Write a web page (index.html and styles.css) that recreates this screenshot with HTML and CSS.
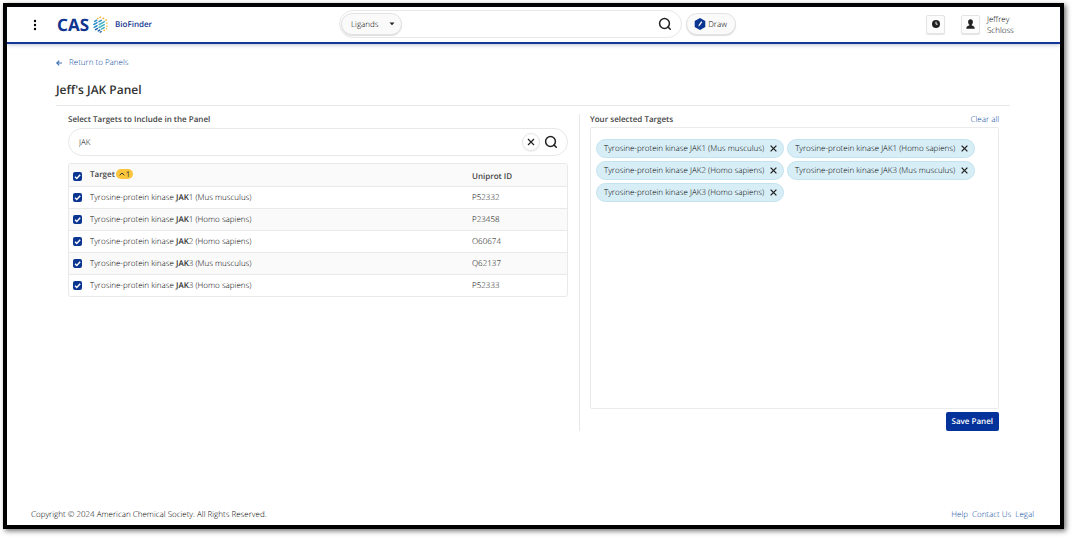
FILE: index.html
```html
<!DOCTYPE html>
<html lang="en">
<head>
<meta charset="utf-8">
<title>CAS BioFinder - Jeff's JAK Panel</title>
<link rel="stylesheet" href="styles.css">
</head>
<body>
<div class="window">
  <header class="topbar">
    <div class="brand">
      <button class="menu-btn" type="button" aria-label="Menu">
        <svg width="4" height="12" viewBox="0 0 4 12"><circle cx="2" cy="2" r="1.2"/><circle cx="2" cy="6" r="1.2"/><circle cx="2" cy="10" r="1.2"/></svg>
      </button>
      <a class="logo" href="#">
        <span class="logo-name">CAS</span>
        <svg class="logo-mark" width="17" height="18" viewBox="0 0 17 18" fill="none" stroke-width="1.600" stroke-linecap="round">
          <g stroke="#f5b93a"><path d="M8 1.500l.5-.3M11.200 2.700l.6-.3M5.500 2.700l.4-.2M14.300 4.500l.5-.3M15.300 7.500v.1M15.300 10.700v.1M14.800 13.500v.1M12.200 15.300l.4-.2"/></g>
          <g stroke="#2c8fc4"><path d="M2.300 5.700l2.200-1.200M1.500 9l3.400-1.900M6.900 6l2.500-1.400M1.800 12l3-1.700"/></g>
          <g stroke="#45b5c4"><path d="M7.200 9l4.600-2.600M12 6.300l.6-.4M7 12.200l5.500-3.100M9.500 13.900l3-1.700"/></g>
          <g stroke="#1d5fa8"><path d="M3.300 14.400l1.800-1M6.200 15.800l1.400-.8M8.300 17l.8-.4"/></g>
        </svg>
        <span class="logo-product">BioFinder</span>
      </a>
    </div>
    <form class="search">
      <div class="search-box">
        <div class="select-wrap">
          <select class="scope" aria-label="Search type"><option>Ligands</option></select>
          <svg class="caret" width="6" height="4" viewBox="0 0 6 4"><path d="M.5.5h5L3 3.300z"/></svg>
        </div>
        <input class="search-input" type="text" aria-label="Search">
        <button class="icon-btn" type="button" aria-label="Search">
          <svg width="14" height="14" viewBox="0 0 14 14" fill="none" stroke="#222" stroke-width="1.5" stroke-linecap="round"><circle cx="6.500" cy="6.500" r="4.900"/><path d="M10.100 10.100l2.200 2.200"/></svg>
        </button>
      </div>
      <button class="draw-btn" type="button">
        <svg width="12" height="12" viewBox="0 0 12 12"><path fill="#0a3591" d="M6 0l5.300 3v6L6 12 .7 9V3z"/><path d="M4.400 8.500l.4-1.700 2.400-3.600 1.100.8-2.400 3.500z" fill="#fff"/></svg>
        Draw
      </button>
    </form>
    <div class="account">
      <button class="square-btn" type="button" aria-label="History">
        <svg width="8" height="8" viewBox="0 0 8 8"><circle cx="4" cy="4" r="4" fill="#222"/><path d="M4 1.600v2.600h1.700" fill="none" stroke="#fff" stroke-width=".9"/></svg>
      </button>
      <button class="square-btn" type="button" aria-label="Account">
        <svg width="9" height="10" viewBox="0 0 9 10"><path fill="#222" d="M4.500.3C6 .3 6.900 1.400 6.900 2.900c0 1.200-.5 2.200-1.200 2.800v.7c1.800.4 3 1 3 3.300H.3c0-2.300 1.200-2.900 3-3.300v-.7C2.600 5.100 2.100 4.100 2.100 2.900 2.100 1.400 3 .3 4.500.3z"/></svg>
      </button>
      <span class="user">Jeffrey Schloss</span>
    </div>
  </header>

  <main class="page">
    <a class="back" href="#">
      <svg width="6" height="6" viewBox="0 0 6 6" fill="none" stroke="#3f72b5" stroke-width="1.200"><path d="M6 3H.9M3.200.6L.8 3l2.400 2.400"/></svg>
      Return to Panels
    </a>
    <h1 class="title">Jeff's JAK Panel</h1>
    <div class="columns">
      <section class="picker">
        <label class="heading" for="target-search">Select Targets to Include in the Panel</label>
        <div class="target-box">
          <input class="target-input" id="target-search" type="text" value="JAK">
          <button class="clear-btn" type="button" aria-label="Clear">
            <svg width="8" height="8" viewBox="0 0 8 8" stroke="#222" stroke-width="1.200"><path d="M1 1l6 6M7 1L1 7"/></svg>
          </button>
          <button class="icon-btn" type="button" aria-label="Search targets">
            <svg width="14" height="14" viewBox="0 0 14 14" fill="none" stroke="#222" stroke-width="1.5" stroke-linecap="round"><circle cx="6.500" cy="6.500" r="4.900"/><path d="M10.100 10.100l2.200 2.200"/></svg>
          </button>
        </div>
        <div class="table-frame">
        <table class="targets">
          <thead>
            <tr><th class="check-col"><input class="check" type="checkbox" checked aria-label="Select all"></th><th><span class="sorted">Target <span class="badge"><svg width="6" height="4" viewBox="0 0 6 4" fill="none" stroke="#333" stroke-width="1"><path d="M.7 3.200L3 1l2.300 2.200"/></svg>1</span></span></th><th class="id-col">Uniprot ID</th></tr>
          </thead>
          <tbody>
            <tr><td><input class="check" type="checkbox" id="t1" checked></td><td><label for="t1">Tyrosine-protein kinase <b>JAK</b>1 (Mus musculus)</label></td><td>P52332</td></tr>
            <tr><td><input class="check" type="checkbox" id="t2" checked></td><td><label for="t2">Tyrosine-protein kinase <b>JAK</b>1 (Homo sapiens)</label></td><td>P23458</td></tr>
            <tr><td><input class="check" type="checkbox" id="t3" checked></td><td><label for="t3">Tyrosine-protein kinase <b>JAK</b>2 (Homo sapiens)</label></td><td>O60674</td></tr>
            <tr><td><input class="check" type="checkbox" id="t4" checked></td><td><label for="t4">Tyrosine-protein kinase <b>JAK</b>3 (Mus musculus)</label></td><td>Q62137</td></tr>
            <tr><td><input class="check" type="checkbox" id="t5" checked></td><td><label for="t5">Tyrosine-protein kinase <b>JAK</b>3 (Homo sapiens)</label></td><td>P52333</td></tr>
          </tbody>
        </table>
        </div>
      </section>
      <section class="selected">
        <div class="selected-head">
          <h2 class="heading">Your selected Targets</h2>
          <a href="#">Clear all</a>
        </div>
        <div class="chips">
          <span class="chip">Tyrosine-protein kinase JAK1 (Mus musculus)<button class="remove" type="button" aria-label="Remove"><svg width="7" height="7" viewBox="0 0 7 7"><path d="M.6.6l5.800 5.800M6.400.6L.6 6.400"/></svg></button></span>
          <span class="chip">Tyrosine-protein kinase JAK1 (Homo sapiens)<button class="remove" type="button" aria-label="Remove"><svg width="7" height="7" viewBox="0 0 7 7"><path d="M.6.6l5.800 5.800M6.400.6L.6 6.400"/></svg></button></span>
          <span class="chip">Tyrosine-protein kinase JAK2 (Homo sapiens)<button class="remove" type="button" aria-label="Remove"><svg width="7" height="7" viewBox="0 0 7 7"><path d="M.6.6l5.800 5.800M6.400.6L.6 6.400"/></svg></button></span>
          <span class="chip">Tyrosine-protein kinase JAK3 (Mus musculus)<button class="remove" type="button" aria-label="Remove"><svg width="7" height="7" viewBox="0 0 7 7"><path d="M.6.6l5.800 5.800M6.400.6L.6 6.400"/></svg></button></span>
          <span class="chip">Tyrosine-protein kinase JAK3 (Homo sapiens)<button class="remove" type="button" aria-label="Remove"><svg width="7" height="7" viewBox="0 0 7 7"><path d="M.6.6l5.800 5.800M6.400.6L.6 6.400"/></svg></button></span>
        </div>
        <button class="save" type="button">Save Panel</button>
      </section>
    </div>
  </main>

  <footer class="footer">
    <span>Copyright © 2024 American Chemical Society. All Rights Reserved.</span>
    <nav class="footer-links"><a href="#">Help</a><a href="#">Contact Us</a><a href="#">Legal</a></nav>
  </footer>
</div>
</body>
</html>
```
FILE: styles.css
```css
* { box-sizing: border-box; }

body {
  margin: 0;
  padding: 3px 9px 9px 3px;
  min-height: 100vh;
  display: flex;
  background: #fff;
  color: #000;
  font: 300 8px/11px "Open Sans", "Noto Sans", sans-serif;
  text-rendering: geometricPrecision;
}

a { color: #0c4a9c; text-decoration: none; }
button, input, select { font: inherit; color: inherit; margin: 0; text-rendering: inherit; }
button { padding: 0; border: 0; background: none; cursor: pointer; }
svg { display: block; flex: none; }

.window {
  flex: 1;
  min-width: 0;
  display: flex;
  flex-direction: column;
  border: 4px solid #000;
  background: #fff;
  box-shadow: 2px 2px 5px rgba(0, 0, 0, .55);
}

.topbar {
  display: grid;
  grid-template-columns: 332px 397px 1fr;
  align-items: center;
  height: 37px;
  padding-bottom: 1px;
  border-bottom: 2px solid #14379a;
  box-shadow: 0 1px 4px rgba(40, 60, 110, .3);
}

.brand { display: flex; align-items: center; gap: 20px; padding-left: 26px; }
.menu-btn, .logo-mark, .logo-product { padding-top: 1px; }
.logo { display: flex; align-items: center; color: #12358f; }
.logo-name { padding-top: 1px; font: 700 17px/20px "Noto Sans", sans-serif; }
.logo-mark { margin: 0 6px 0 3px; }
.logo-product { font-weight: 600; font-size: 8px; }

.search { display: flex; align-items: center; gap: 4px; }
.search-box {
  flex: 1;
  display: flex;
  align-items: center;
  height: 28px;
  padding: 0 9px 0 1px;
  border: 1px solid #e8e8e8;
  border-radius: 14px;
}
.select-wrap { display: grid; align-items: center; }
.select-wrap > * { grid-area: 1 / 1; }
.scope {
  appearance: none;
  width: 61px;
  height: 22px;
  padding: 0 9px;
  border: 1px solid #e4e4e4;
  border-radius: 11px;
  background: #fafafa;
  box-shadow: 0 1px 1px #ddd;
}
.caret { justify-self: end; margin-right: 7px; fill: #222; pointer-events: none; }
.search-input, .target-input { flex: 1; min-width: 0; border: 0; outline: 0; background: none; padding: 0; }
.draw-btn {
  display: flex;
  align-items: center;
  gap: 2px;
  height: 22px;
  padding: 0 8px 0 7px;
  border: 1px solid #e4e4e4;
  border-radius: 11px;
  background: #fafafa;
  box-shadow: 0 1px 1px #ddd;
}

.account { display: flex; align-items: center; justify-content: flex-end; padding-right: 38px; }
.square-btn {
  display: grid;
  place-items: center;
  width: 19px;
  height: 19px;
  margin-right: 16px;
  border: 1px solid #e4e4e4;
  border-radius: 2px;
  background: #fcfcfc;
  box-shadow: 0 1px 1px #e4e4e4;
}
.square-btn + .square-btn { margin-right: 7px; }
.user { width: 35px; padding-top: 2px; }

.page { flex: 1; padding: 13px 50px 0 49px; }
.back { display: flex; align-items: center; gap: 7px; }
.title {
  margin: 12px 0 0;
  padding-bottom: 5px;
  border-bottom: 1px solid #e8e8e8;
  color: #333;
  font-size: 12px;
  line-height: 20px;
  font-weight: 600;
}

.columns { display: grid; grid-template-columns: 524px 1fr; margin-top: 8px; }
.picker { padding: 0 11px 0 12px; border-right: 1px solid #e8e8e8; }
.selected { display: flex; flex-direction: column; padding: 0 11px 0 10px; }
.heading { display: block; margin: 0; color: #444; font-size: 8px; font-weight: 600; line-height: 11px; }

.target-box {
  display: flex;
  align-items: center;
  height: 28px;
  margin: 3px 0 7px;
  padding: 0 9px 0 10px;
  border: 1px solid #e8e8e8;
  border-radius: 14px;
}
.clear-btn {
  display: grid;
  place-items: center;
  width: 18px;
  height: 18px;
  margin-right: 4px;
  border: 1px solid #e4e4e4;
  border-radius: 9px;
  box-shadow: 0 1px 1px #eee;
}

.table-frame { border: 1px solid #e9e9e9; border-radius: 3px; overflow: hidden; }
.targets { width: 100%; border-collapse: collapse; table-layout: fixed; }
.targets th, .targets td { height: 22px; padding: 0; text-align: left; vertical-align: middle; border-top: 1px solid #e9e9e9; }
.targets th { height: 22px; padding-top: 3px; border: 0; color: #444; font-weight: 600; background: #fafafa; }
.targets tbody tr:nth-child(even) { background: #fafafa; }
.check-col { width: 21px; }
.id-col { width: 95px; }
.sorted { display: flex; align-items: center; gap: 1px; padding-bottom: 4px; }
.badge { display: inline-flex; align-items: center; gap: 1px; height: 10px; padding: 0 3px; border-radius: 5px; background: #fbc53c; font-weight: 400; color: #333; }
.check {
  display: block;
  appearance: none;
  width: 9px;
  height: 9px;
  margin-left: 4px;
  border-radius: 2px;
  background: #0a3591;
}
.check:checked {
  background: #0a3591 url("data:image/svg+xml,%3Csvg xmlns='http://www.w3.org/2000/svg' viewBox='0 0 9 9'%3E%3Cpath d='M2 4.700l1.800 1.700L7.200 2.700' fill='none' stroke='white' stroke-width='1.400'/%3E%3C/svg%3E") center / 9px 9px;
}
b { font-weight: 600; color: #333; }

.selected-head { display: flex; justify-content: space-between; }
.chips {
  display: flex;
  flex-wrap: wrap;
  align-content: flex-start;
  gap: 3px;
  min-height: 282px;
  margin-top: 2px;
  padding: 11px 5px;
  border: 1px solid #ebebeb;
  border-radius: 2px;
}
.chip {
  display: inline-flex;
  align-items: center;
  gap: 6px;
  height: 19px;
  padding: 0 6px 0 7px;
  border: 1px solid #c3e3ef;
  border-radius: 10px;
  background: #d8eef7;
}
.remove svg { stroke: #222; stroke-width: 1.300; }
.save {
  align-self: flex-end;
  height: 19px;
  margin: 3px 0 0;
  padding: 0 6px;
  border-radius: 2px;
  background: #03329b;
  color: #fff;
  font-weight: 600;
}

.footer { display: flex; justify-content: space-between; padding: 0 26px 5px 24px; }
.footer-links { display: flex; gap: 4px; }
```
